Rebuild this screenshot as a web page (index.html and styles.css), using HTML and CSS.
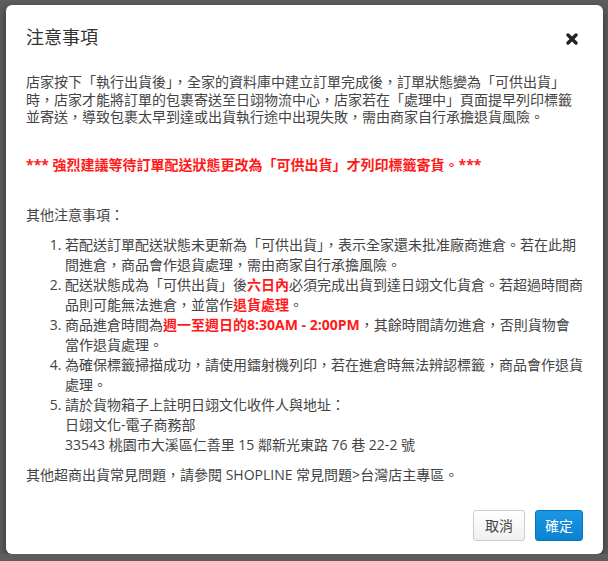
FILE: index.html
```html
<!DOCTYPE html>
<html lang="zh-Hant">
<head>
    <meta charset="UTF-8">
    <title>注意事項</title>
    <link rel="stylesheet" href="styles.css">
</head>
<body>
    <div class="modal">
        <div class="modal-header">
            <div class="modal-title">注意事項</div>
            <button class="close" aria-label="close">
                <svg width="12" height="12" viewBox="0 0 12 12">
                    <path d="M2 2 L10 10 M10 2 L2 10" stroke="#222" stroke-width="3.4" stroke-linecap="round"/>
                </svg>
            </button>
        </div>
        <div class="modal-body">
            <p class="intro">店家按下「執行出貨後」，全家的資料庫中建立訂單完成後，訂單狀態變為「可供出貨」時，店家才能將訂單的包裹寄送至日翊物流中心，店家若在「處理中」頁面提早列印標籤並寄送，導致包裹太早到達或出貨執行途中出現失敗，需由商家自行承擔退貨風險。</p>
            <p class="warning">*** 強烈建議等待訂單配送狀態更改為「可供出貨」才列印標籤寄貨。***</p>
            <p class="other">其他注意事項：</p>
            <ol class="notes">
                <li>若配送訂單配送狀態未更新為「可供出貨」，表示全家還未批准廠商進倉。若在此期間進倉，商品會作退貨處理，需由商家自行承擔風險。</li>
                <li>配送狀態成為「可供出貨」後<b class="hl">六日內</b>必須完成出貨到達日翊文化貨倉。若超過時間商品則可能無法進倉，並當作<b class="hl">退貨處理</b>。</li>
                <li>商品進倉時間為<b class="hl">週一至週日的8:30AM - 2:00PM</b>，其餘時間請勿進倉，否則貨物會當作退貨處理。</li>
                <li>為確保標籤掃描成功，請使用鐳射機列印，若在進倉時無法辨認標籤，商品會作退貨處理。</li>
                <li>請於貨物箱子上註明日翊文化收件人與地址：<br>日翊文化-電子商務部<br>33543 桃園市大溪區仁善里 15 鄰新光東路 76 巷 22-2 號</li>
            </ol>
            <p class="faq">其他超商出貨常見問題，請參閱 SHOPLINE 常見問題&gt;台灣店主專區。</p>
        </div>
        <div class="modal-footer">
            <button class="btn btn-default">取消</button>
            <button class="btn btn-primary">確定</button>
        </div>
    </div>
</body>
</html>
```

FILE: styles.css
```css
* {
    margin: 0;
    box-sizing: border-box;
}

body {
    background-color: #5d5d5d;
    font-family: "Open Sans", "Noto Sans CJK TC", sans-serif;
    font-size: 14px;
    color: #444;
    padding: 5px 0 0 6px;
}

.modal {
    width: 597px;
    height: 549px;
    background-color: white;
    border-radius: 6px;
    box-shadow: 0 3px 9px rgba(0,0,0,0.5);
    display: flex;
    flex-direction: column;
}

.modal-header {
    display: flex;
    justify-content: space-between;
    align-items: center;
    padding: 19px 25px 0 20px;
}

.modal-title {
    font-size: 18px;
    line-height: 26px;
    color: #333;
}

.close {
    border: none;
    background: none;
    padding: 0;
    width: 12px;
    height: 12px;
    display: flex;
    margin-top: 3px;
}

.modal-body {
    width: 557px;
    margin-left: 20px;
    padding-top: 23px;
}

.intro {
    line-height: 17.5px;
    margin-bottom: 30px;
}

.warning {
    line-height: 17.5px;
    font-weight: bold;
    color: #ff1a1a;
    margin-bottom: 33px;
}

.other {
    line-height: 17.5px;
    margin-bottom: 11px;
}

.notes {
    padding-left: 39px;
    line-height: 20px;
    margin-bottom: 11px;
}

.hl {
    color: #ff1a1a;
}

.faq {
    line-height: 17.5px;
}

.modal-footer {
    margin-top: auto;
    width: 557px;
    margin-left: 20px;
    padding-bottom: 13px;
    display: flex;
    justify-content: flex-end;
    gap: 10px;
}

.btn {
    font-family: "Open Sans", "Noto Sans CJK TC", sans-serif;
    font-size: 14px;
    line-height: 19px;
    padding: 5px 11px;
    border-radius: 3px;
    border: 1px solid #ccc;
}

.btn-default {
    background: linear-gradient(#ffffff, #f0f0f0);
    color: #444;
}

.btn-primary {
    padding: 5px 9px;
    background: linear-gradient(#1a96e2, #0a82cf);
    border-color: #0a74b8;
    color: white;
}
```
